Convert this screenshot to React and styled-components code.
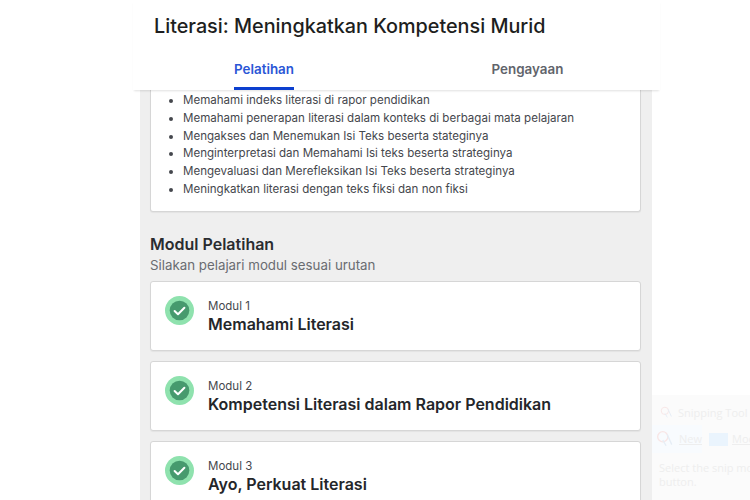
import React from "react";
import styled, { createGlobalStyle } from "styled-components";

const Global = createGlobalStyle`
  html, body { margin: 0; padding: 0; background: #fff; height: 500px; overflow: hidden; }
  body { font-family: Inter, "Liberation Sans", sans-serif; }
`;
const Page = styled.div`
  position: relative;
  width: 750px;
  height: 500px;
  overflow: hidden;
  background: #fff;
`;
const Header = styled.header`
  position: relative;
  z-index: 1;
  width: 527px;
  height: 90px;
  margin-left: 133px;
  background: #fff;
  box-shadow: 0 2px 2px -1px rgba(0, 0, 0, 0.12);
  display: flex;
  flex-direction: column;
`;
const Title = styled.h1`
  margin: 0;
  padding: 13px 0 0 21px;
  height: 52px;
  box-sizing: border-box;
  font-size: 19.8px;
  line-height: 27px;
  font-weight: 500;
  color: #1d1e20;
`;
const Tabs = styled.nav`
  display: grid;
  grid-template-columns: 262px 1fr;
  height: 38px;
`;
const Tab = styled.div`
  display: flex;
  justify-content: center;
`;
const TabLabel = styled.span`
  height: 38px;
  padding: 8px 0 0;
  box-sizing: border-box;
  font-size: 13.4px;
  line-height: 18px;
  font-weight: 600;
  color: ${(p) => (p.$active ? "#2b56d6" : "#61646b")};
  border-bottom: ${(p) => (p.$active ? "3px solid #0c3fcf" : "none")};
`;
const Column = styled.main`
  width: 512px;
  height: 410px;
  margin-left: 140px;
  padding: 0 11px 0 10px;
  box-sizing: border-box;
  background: #efefef;
  display: flex;
  flex-direction: column;
`;
const GoalCard = styled.section`
  height: 122px;
  flex: none;
  box-sizing: border-box;
  background: #fff;
  border: 1px solid #d6d6d6;
  border-top: none;
  border-radius: 0 0 3px 3px;
  box-shadow: 0 1px 1px rgba(0, 0, 0, 0.05);
`;
const GoalList = styled.ul`
  margin: 0;
  padding: 2px 0 0 32px;
  list-style: disc;
  font-size: 11.56px;
  line-height: 17.8px;
  color: #45474d;
`;
const SectionTitle = styled.h2`
  margin: 22px 0 0;
  font-size: 16px;
  line-height: 20px;
  font-weight: 600;
  color: #2a2c30;
`;
const SectionSub = styled.p`
  margin: 2px 0 7px;
  font-size: 13.3px;
  line-height: 18px;
  color: #6a6c71;
`;
const ModuleList = styled.div`
  display: flex;
  flex-direction: column;
  gap: 10px;
`;
const ModuleCard = styled.article`
  flex: none;
  height: 70px;
  box-sizing: border-box;
  display: flex;
  align-items: flex-start;
  padding: 15px 0 0 14px;
  background: #fff;
  border: 1px solid #d6d6d6;
  border-radius: 3px;
  box-shadow: 0 1px 1px rgba(0, 0, 0, 0.05);
`;
const ModuleIcon = styled.svg`
  flex: none;
  margin-top: -1px;
`;
const ModuleText = styled.div`
  margin-left: 14px;
  padding-top: 1px;
  display: flex;
  flex-direction: column;
`;
const ModuleLabel = styled.span`
  font-size: 11.5px;
  line-height: 16px;
  color: #45474d;
`;
const ModuleName = styled.span`
  font-size: 16px;
  line-height: 20px;
  font-weight: 600;
  color: #24262a;
`;
const Ghost = styled.aside`
  position: absolute;
  left: 652px;
  top: 395px;
  width: 98px;
  height: 105px;
  background: #fbfbfb;
  color: #eeeeee;
  font-size: 11px;
  line-height: 14px;
  font-family: "Open Sans", sans-serif;
  white-space: nowrap;
  overflow: hidden;
`;
const GhostTitle = styled.div`
  display: flex;
  align-items: center;
  gap: 5px;
  padding: 7px 0 0 8px;
  height: 21px;
`;
const GhostRow = styled.div`
  display: flex;
  align-items: center;
  margin-top: 2px;
  height: 28px;
`;
const GhostNew = styled.div`
  display: flex;
  align-items: center;
  gap: 5px;
  width: 51px;
  height: 100%;
  padding-left: 4px;
  box-sizing: border-box;
  background: #f8fbfe;
  text-decoration: underline;
`;
const GhostMode = styled.div`
  display: flex;
  align-items: center;
  gap: 4px;
  margin-left: 7px;
  text-decoration: underline;
`;
const GhostSwatch = styled.span`
  display: block;
  width: 19px;
  height: 13px;
  background: #eaf4fd;
`;
const GhostNote = styled.div`
  margin: 8px 0 0 7px;
`;

function CheckIcon() {
  return (
    <ModuleIcon width="29" height="29" viewBox="0 0 29 29">
      <circle cx="14.5" cy="14.5" r="14.5" fill="#8fe2ae" />
      <circle cx="14.5" cy="14.5" r="9.8" fill="#469a6e" />
      <path d="M9.6 15l3.4 3.3 6.4-6.6" fill="none" stroke="#fff" strokeWidth="2" strokeLinecap="round" strokeLinejoin="round" />
    </ModuleIcon>
  );
}

function ScissorsGhost({ size }) {
  return (
    <svg width={size} height={size} viewBox="0 0 16 16" fill="none" stroke="#f8e6e6" strokeWidth="1.2" style={{ flex: "none" }}>
      <circle cx="6" cy="6" r="4.5" />
      <path d="M6 9l3 5M10 4l4 9" stroke="#e6eef6" />
    </svg>
  );
}

const goals = [
  "Memahami indeks literasi di rapor pendidikan",
  "Memahami penerapan literasi dalam konteks di berbagai mata pelajaran",
  "Mengakses dan Menemukan Isi Teks beserta stateginya",
  "Menginterpretasi dan Memahami Isi teks beserta strateginya",
  "Mengevaluasi dan Merefleksikan Isi Teks beserta strateginya",
  "Meningkatkan literasi dengan teks fiksi dan non fiksi",
];
const modules = [
  ["Modul 1", "Memahami Literasi"],
  ["Modul 2", "Kompetensi Literasi dalam Rapor Pendidikan"],
  ["Modul 3", "Ayo, Perkuat Literasi"],
];

export default function App() {
  return (
    <Page>
      <Global />
      <Header>
        <Title>Literasi: Meningkatkan Kompetensi Murid</Title>
        <Tabs>
          <Tab><TabLabel $active>Pelatihan</TabLabel></Tab>
          <Tab><TabLabel>Pengayaan</TabLabel></Tab>
        </Tabs>
      </Header>
      <Column>
        <GoalCard>
          <GoalList>
            {goals.map((g) => <li key={g}>{g}</li>)}
          </GoalList>
        </GoalCard>
        <SectionTitle>Modul Pelatihan</SectionTitle>
        <SectionSub>Silakan pelajari modul sesuai urutan</SectionSub>
        <ModuleList>
          {modules.map(([label, name]) => (
            <ModuleCard key={label}>
              <CheckIcon />
              <ModuleText>
                <ModuleLabel>{label}</ModuleLabel>
                <ModuleName>{name}</ModuleName>
              </ModuleText>
            </ModuleCard>
          ))}
        </ModuleList>
      </Column>
      <Ghost>
        <GhostTitle><ScissorsGhost size={13} />Snipping Tool</GhostTitle>
        <GhostRow>
          <GhostNew><ScissorsGhost size={18} />New</GhostNew>
          <GhostMode><GhostSwatch />Mode</GhostMode>
        </GhostRow>
        <GhostNote>Select the snip mode<br />button.</GhostNote>
      </Ghost>
    </Page>
  );
}
